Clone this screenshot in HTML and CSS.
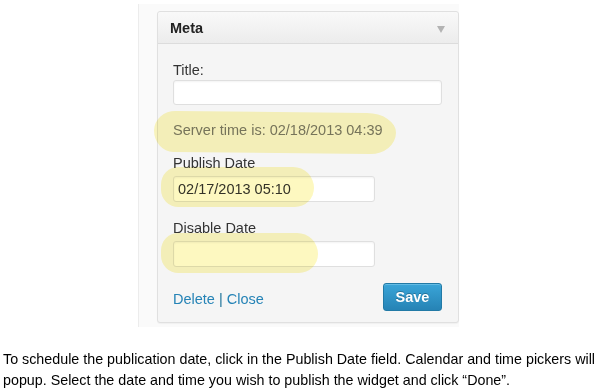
FILE: index.html
```html
<!DOCTYPE html>
<html>
<head>
<meta charset="utf-8">
<link rel="stylesheet" href="styles.css">
</head>
<body>
<div class="panel">
  <div class="widget">
    <div class="widget-head">
      <span class="widget-title">Meta</span>
      <span class="arrow"></span>
    </div>
    <div class="widget-body">
      <div class="label">Title:</div>
      <div class="input wide"></div>
      <div class="server">Server time is: 02/18/2013 04:39</div>
      <div class="label gap">Publish Date</div>
      <div class="input short">02/17/2013 05:10</div>
      <div class="label gap2">Disable Date</div>
      <div class="input short"></div>
      <div class="footer">
        <div class="links"><a>Delete</a> | <a>Close</a></div>
        <button class="save">Save</button>
      </div>
    </div>
  </div>
  <div class="hl hl1"></div>
  <div class="hl hl2"></div>
  <div class="hl hl3"></div>
</div>
<p class="caption">To schedule the publication date, click in the Publish Date field. Calendar and time pickers will popup. Select the date and time you wish to publish the widget and click “Done”.</p>
</body>
</html>
```
FILE: styles.css
```css
html, body {
  margin: 0;
  padding: 0;
  background: #fff;
}
body {
  font-family: "Liberation Sans", Arial, sans-serif;
}
.panel {
  position: relative;
  margin: 4px 0 0 138px;
  width: 321px;
  height: 323px;
  box-sizing: border-box;
  background: #fafafa;
  border-left: 1px solid #ececec;
  padding: 7px 1px 0 18px;
}
.widget {
  width: 302px;
  height: 312px;
  box-sizing: border-box;
  border: 1px solid #e0e0e0;
  border-radius: 3px;
  background: #f5f5f5;
  box-shadow: 0 1px 1px rgba(0,0,0,0.04);
}
.widget-head {
  height: 32px;
  box-sizing: border-box;
  border-bottom: 1px solid #dcdcdc;
  background: linear-gradient(#f9f9f9, #ececec);
  border-radius: 3px 3px 0 0;
  display: flex;
  align-items: center;
  justify-content: space-between;
  padding: 0 13px 0 12px;
}
.widget-title {
  font-weight: bold;
  font-size: 14.5px;
  color: #222;
  margin-top: 1px;
}
.arrow {
  width: 0;
  height: 0;
  border-left: 4px solid transparent;
  border-right: 4px solid transparent;
  border-top: 7px solid #b3b3b3;
  margin-top: 3px;
}
.widget-body {
  padding: 18px 15px 0 15px;
  font-size: 14.5px;
  line-height: 17px;
  color: #333;
}
.label {
  margin-bottom: 1px;
}
.label.gap {
  margin-top: 16px;
  margin-bottom: 4px;
}
.label.gap2 {
  margin-top: 18px;
  margin-bottom: 4px;
}
.input {
  box-sizing: border-box;
  background: #fff;
  border: 1px solid #dfdfdf;
  border-radius: 3px;
  box-shadow: inset 0 1px 2px rgba(0,0,0,0.05);
  height: 26px;
  padding: 0 4px;
  line-height: 24px;
  font-size: 14.5px;
  color: #333;
}
.input.wide {
  width: 269px;
  height: 25px;
}
.input.short {
  width: 202px;
}
.server {
  margin-top: 17px;
  color: #777;
}
.footer {
  margin-top: 16px;
  display: flex;
  justify-content: space-between;
  align-items: center;
  width: 269px;
}
.links {
  color: #21759b;
  margin-top: 4px;
}
.links a {
  color: #2583b6;
}
.save {
  width: 59px;
  height: 28px;
  box-sizing: border-box;
  border: 1px solid #227aa6;
  border-radius: 3px;
  background: linear-gradient(#3aa5d8, #2683b5);
  color: #fff;
  font-family: "Liberation Sans", Arial, sans-serif;
  font-weight: bold;
  font-size: 14.5px;
  padding: 0;
  text-shadow: 0 -1px 0 rgba(0,0,0,0.25);
  box-shadow: inset 0 1px 0 rgba(140,210,240,0.5);
}
.hl {
  position: absolute;
  background: #fdf8c0;
  mix-blend-mode: multiply;
}
.hl1 {
  left: 15px;
  top: 108px;
  width: 242px;
  height: 41px;
  border-radius: 22px 30px 26px 20px / 20px 20px 22px 22px;
  transform: rotate(0.6deg);
}
.hl2 {
  left: 22px;
  top: 163px;
  width: 153px;
  height: 40px;
  border-radius: 20px 24px 22px 20px;
}
.hl3 {
  left: 22px;
  top: 229px;
  width: 157px;
  height: 40px;
  border-radius: 20px 24px 22px 20px;
}
.caption {
  margin: 22px 0 0 3px;
  font-size: 14.3px;
  line-height: 21px;
  color: #000;
  width: 597px;
}
```
